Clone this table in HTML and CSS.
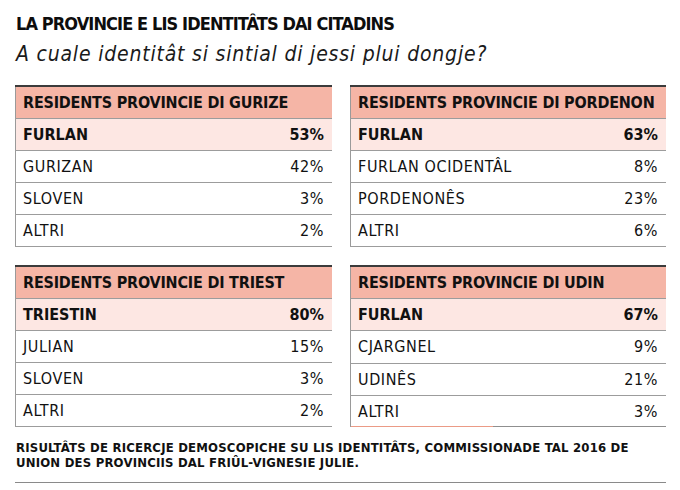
FILE: index.html
```html
<!DOCTYPE html>
<html lang="fur">
<head>
<meta charset="utf-8">
<title>La provincie e lis identitâts dai citadins</title>
<link rel="stylesheet" href="styles.css">
</head>
<body>
<div class="page">
  <header class="head">
    <h1 class="title">LA PROVINCIE E LIS IDENTITÂTS DAI CITADINS</h1>
    <p class="subtitle">A cuale identitât si sintial di jessi plui dongje?</p>
  </header>

  <div class="grid">
    <table class="tbl">
      <colgroup><col class="c-label"><col class="c-num"></colgroup>
      <tr class="th"><td colspan="2">RESIDENTS PROVINCIE DI GURIZE</td></tr>
      <tr class="top"><td>FURLAN</td><td class="num">53%</td></tr>
      <tr><td>GURIZAN</td><td class="num">42%</td></tr>
      <tr><td>SLOVEN</td><td class="num">3%</td></tr>
      <tr><td>ALTRI</td><td class="num">2%</td></tr>
    </table>

    <table class="tbl">
      <colgroup><col class="c-label"><col class="c-num"></colgroup>
      <tr class="th"><td colspan="2">RESIDENTS PROVINCIE DI PORDENON</td></tr>
      <tr class="top"><td>FURLAN</td><td class="num">63%</td></tr>
      <tr><td>FURLAN OCIDENTÂL</td><td class="num">8%</td></tr>
      <tr><td>PORDENONÊS</td><td class="num">23%</td></tr>
      <tr><td>ALTRI</td><td class="num">6%</td></tr>
    </table>

    <table class="tbl">
      <colgroup><col class="c-label"><col class="c-num"></colgroup>
      <tr class="th"><td colspan="2">RESIDENTS PROVINCIE DI TRIEST</td></tr>
      <tr class="top"><td>TRIESTIN</td><td class="num">80%</td></tr>
      <tr><td>JULIAN</td><td class="num">15%</td></tr>
      <tr><td>SLOVEN</td><td class="num">3%</td></tr>
      <tr><td>ALTRI</td><td class="num">2%</td></tr>
    </table>

    <table class="tbl tbl-udin">
      <colgroup><col class="c-label"><col class="c-num"></colgroup>
      <tr class="th"><td colspan="2">RESIDENTS PROVINCIE DI UDIN</td></tr>
      <tr class="top"><td>FURLAN</td><td class="num">67%</td></tr>
      <tr><td>CJARGNEL</td><td class="num">9%</td></tr>
      <tr><td>UDINÊS</td><td class="num">21%</td></tr>
      <tr class="last"><td>ALTRI</td><td class="num">3%</td></tr>
    </table>
  </div>

  <footer class="foot">
    <p>RISULTÂTS DE RICERCJE DEMOSCOPICHE SU LIS IDENTITÂTS, COMMISSIONADE TAL 2016 DE UNION DES PROVINCIIS DAL FRIÛL-VIGNESIE JULIE.</p>
  </footer>
</div>
</body>
</html>
```

FILE: styles.css
```css
html, body {
  margin: 0;
  padding: 0;
  background: #ffffff;
}

body {
  font-family: "DejaVu Sans Condensed", "DejaVu Sans", sans-serif;
  color: #111111;
}

.page {
  width: 651px;
  padding: 13px 0 0 15px;
}

.head {
  padding-left: 1px;
}

.title {
  margin: 0;
  font-size: 18px;
  line-height: 22px;
  font-weight: bold;
  letter-spacing: -0.9px;
  color: #0d0d0d;
}

.subtitle {
  margin: 3px 0 0;
  font-size: 21px;
  line-height: 32px;
  font-style: italic;
  letter-spacing: 0.8px;
  color: #1a1a1a;
}

.grid {
  margin-top: 15px;
  display: grid;
  grid-template-columns: 317px 316px;
  column-gap: 18px;
  row-gap: 18px;
}

.tbl {
  width: 100%;
  table-layout: fixed;
  border-collapse: collapse;
  border-top: 2px solid #3b3b3b;
  border-left: 1px solid #9a9a9a;
}

.tbl .c-num {
  width: 76px;
}

.tbl td {
  height: 31px;
  padding: 0 8px 0 7px;
  border-bottom: 1px solid #9c9c9c;
  font-size: 16px;
  line-height: 31px;
  letter-spacing: 0.6px;
  vertical-align: middle;
  white-space: nowrap;
  overflow: hidden;
}

.tbl .num {
  text-align: right;
}

.tbl .th td {
  background: #f5b5a6;
  font-weight: bold;
  letter-spacing: -0.2px;
}

.tbl .top td {
  background: #fde7e3;
  font-weight: bold;
  letter-spacing: 0;
}

.tbl-udin .last td {
  border-bottom: none;
  background-image: linear-gradient(to right, #eb9b86 0, #eb9b86 142px, #8f8f8f 142px, #8f8f8f 100%);
  background-size: 100% 1px;
  background-position: left bottom;
  background-repeat: no-repeat;
}

.tbl-udin .last .num {
  background-image: linear-gradient(#8f8f8f, #8f8f8f);
}

.foot {
  margin-top: 13px;
  width: 651px;
  border-bottom: 1px solid #8a8a8a;
  padding-bottom: 12px;
}

.foot p {
  margin: 0;
  padding-left: 1px;
  font-size: 13px;
  line-height: 15px;
  font-weight: bold;
  letter-spacing: 0.2px;
  color: #111111;
}
```
